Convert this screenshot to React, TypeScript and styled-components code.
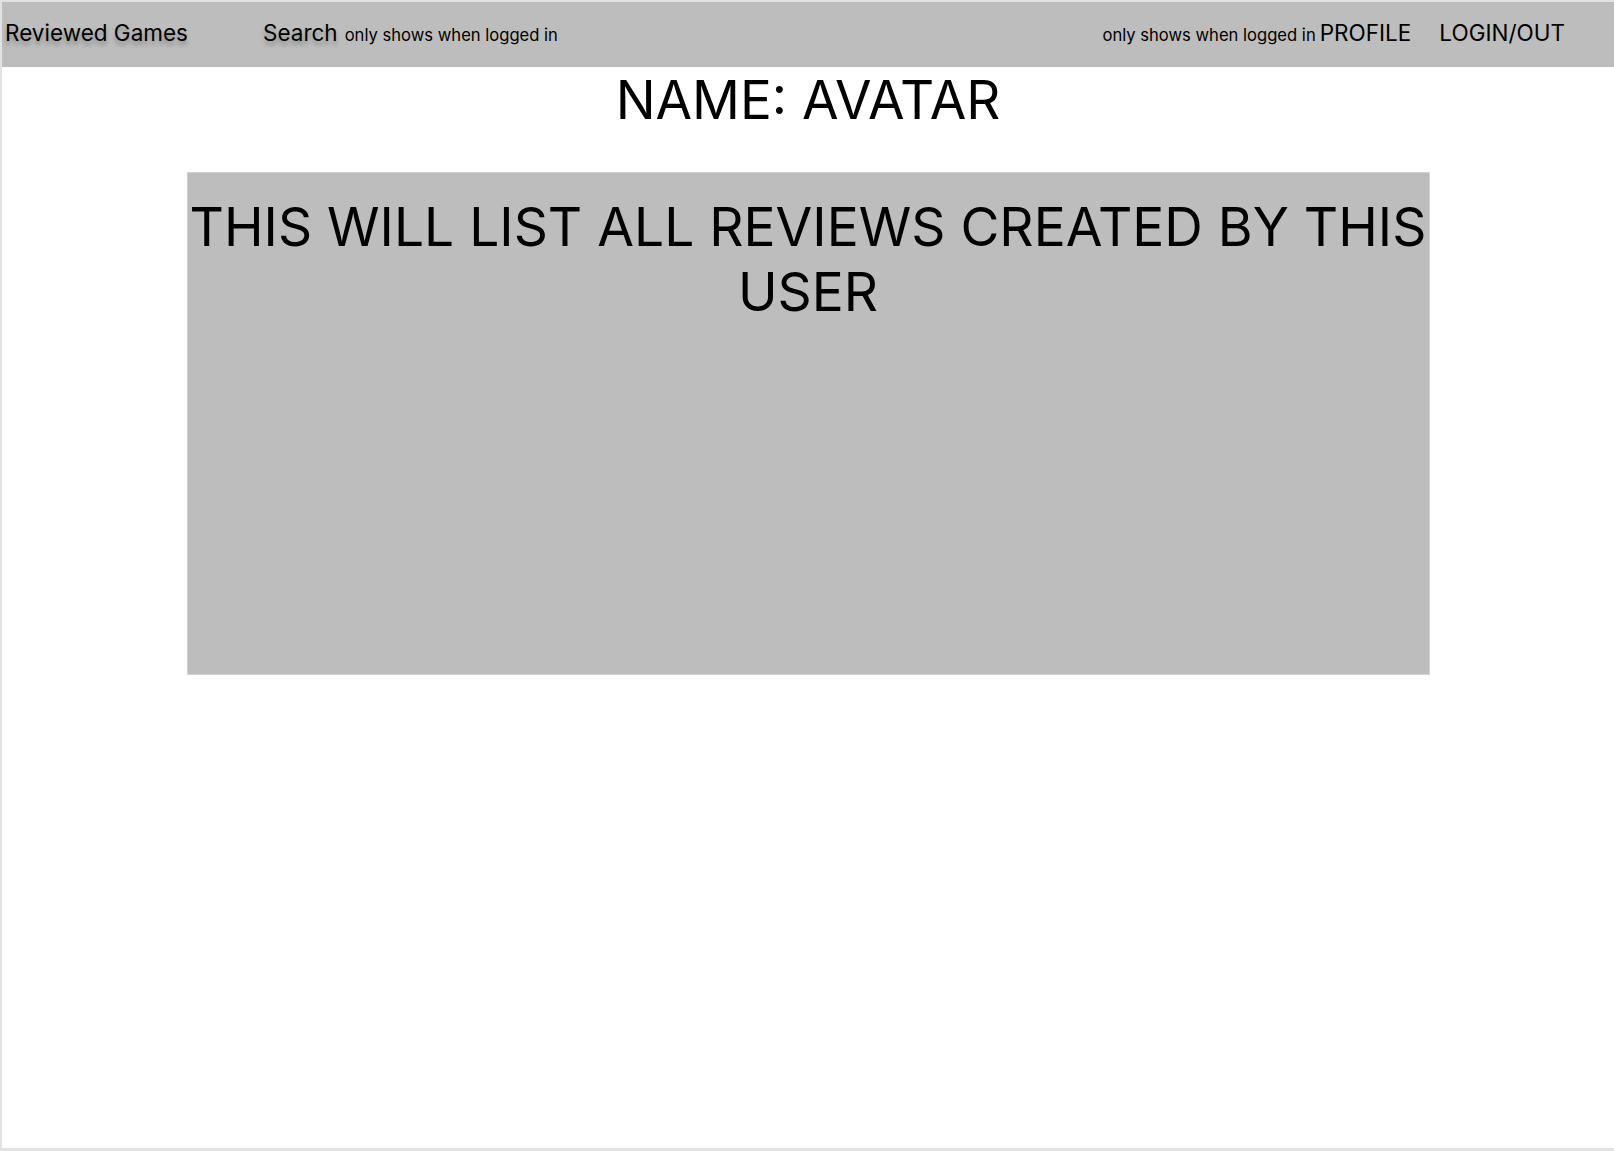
import React from "react";
import styled, { createGlobalStyle } from "styled-components";

const Global = createGlobalStyle`
  html, body { margin: 0; padding: 0; background: #ffffff; }
  body { font-family: Inter, "Noto Sans", sans-serif; color: #000; }
`;

const Frame = styled.div`
  box-sizing: border-box;
  width: 1614px;
  height: 1151px;
  border-left: 2px solid #e2e2e2;
  border-top: 2px solid #e2e2e2;
  border-bottom: 3px solid #e2e2e2;
  display: flex;
  flex-direction: column;
  align-items: center;
  background: #fff;
`;

const Header = styled.header`
  box-sizing: border-box;
  align-self: stretch;
  height: 65px;
  background: #bdbdbd;
  display: flex;
  align-items: center;
  padding: 0 49px 2px 3px;
`;

const Group = styled.div<{ $push?: boolean }>`
  display: flex;
  align-items: baseline;
  margin-left: ${(p) => (p.$push ? "auto" : "0")};
`;

const NavText = styled.span<{ $shadow?: boolean; $gap?: number }>`
  font-size: 22.5px;
  line-height: 1;
  letter-spacing: 0;
  margin-right: ${(p) => p.$gap ?? 0}px;
  text-shadow: ${(p) => (p.$shadow ? "0 4px 4px rgba(0,0,0,0.28)" : "none")};
`;

const Note = styled.span<{ $gap?: number }>`
  font-size: 16.6px;
  line-height: 1;
  margin-right: ${(p) => p.$gap ?? 0}px;
`;

const Title = styled.h1`
  margin: 1px 0 0;
  font-size: 53px;
  font-weight: 400;
  line-height: 64px;
  text-align: center;
`;

const ReviewsBox = styled.section`
  box-sizing: border-box;
  margin-top: 40px;
  width: 1243px;
  height: 503px;
  background: #bdbdbd;
  border: 1px solid #d2d2d2;
  padding-top: 21px;
`;

const BoxText = styled.p`
  margin: 0;
  font-size: 53.3px;
  line-height: 65px;
  text-align: center;
  font-weight: 400;
`;

export default function App() {
  return (
    <>
      <Global />
      <Frame>
        <Header>
          <Group>
            <NavText $shadow $gap={75}>Reviewed Games</NavText>
            <NavText $shadow $gap={7}>Search</NavText>
            <Note>only shows when logged in</Note>
          </Group>
          <Group $push>
            <Note $gap={4}>only shows when logged in</Note>
            <NavText $gap={28}>PROFILE</NavText>
            <NavText>LOGIN/OUT</NavText>
          </Group>
        </Header>
        <Title>NAME: AVATAR</Title>
        <ReviewsBox>
          <BoxText>THIS WILL LIST ALL REVIEWS CREATED BY THIS USER</BoxText>
        </ReviewsBox>
      </Frame>
    </>
  );
}
